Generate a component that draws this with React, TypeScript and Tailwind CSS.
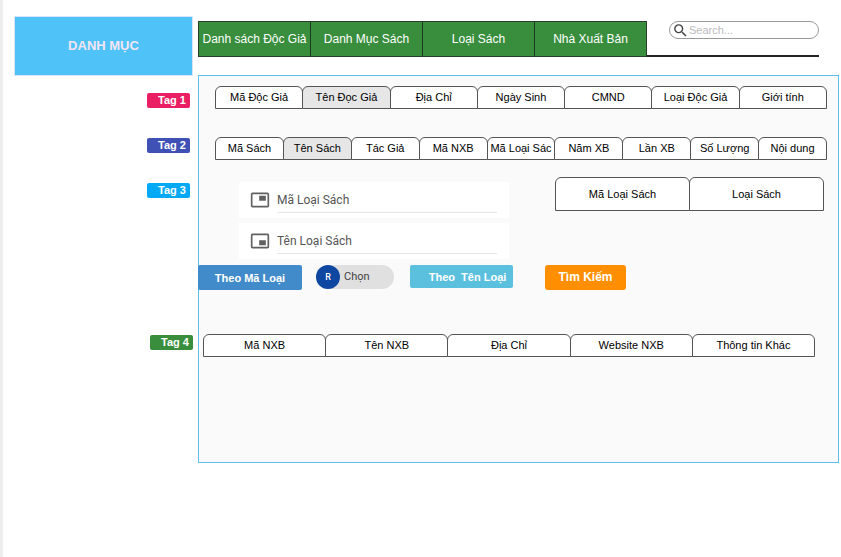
import { MdPictureInPicture, MdPictureInPictureAlt, MdSearch } from "react-icons/md";

const navItems = ["Danh sách Độc Giả", "Danh Mục Sách", "Loại Sách", "Nhà Xuất Bản"];

const readerTabs = ["Mã Độc Giả", "Tên Đọc Giả", "Địa Chỉ", "Ngày Sinh", "CMND", "Loại Độc Giả", "Giới tính"];
const bookTabs = ["Mã Sách", "Tên Sách", "Tác Giả", "Mã NXB", "Mã Loại Sác", "Năm XB", "Lần XB", "Số Lượng", "Nội dung"];
const categoryTabs = ["Mã Loại Sách", "Loại Sách"];
const publisherTabs = ["Mã NXB", "Tên NXB", "Địa Chỉ", "Website NXB", "Thông tin Khác"];

function TabRow({
  items,
  active = -1,
  height = "h-[23px] pb-[2px]",
  className = "",
}: {
  items: string[];
  active?: number;
  height?: string;
  className?: string;
}) {
  return (
    <div role="tablist" className={`flex pl-px ${className}`}>
      {items.map((item, i) => (
        <button
          key={item}
          type="button"
          role="tab"
          aria-selected={i === active}
          className={`-ml-px min-w-0 flex-1 basis-0 whitespace-nowrap rounded-t-md border border-[#555] text-[11px] leading-4 text-black ${height} ${
            i === active ? "bg-[#e6e6e6]" : "bg-white"
          }`}
        >
          {item}
        </button>
      ))}
    </div>
  );
}

function Tag({ text, className }: { text: string; className: string }) {
  return (
    <span
      className={`block h-[15px] w-[43px] rounded-[2px] pr-1 text-right text-[11px] font-bold leading-[15px] text-white ${className}`}
    >
      {text}
    </span>
  );
}

function Field({ label, Icon }: { label: string; Icon: typeof MdPictureInPicture }) {
  return (
    <div className="flex h-9 items-center bg-white pl-[11px] pr-3">
      <Icon size={20} className="shrink-0 text-[#616161]" aria-hidden />
      <input
        type="text"
        aria-label={label}
        placeholder={label}
        className="ml-[7px] h-[26px] min-w-0 flex-1 border-b border-[#e6e6e6] font-['Roboto',sans-serif] text-[12px] leading-4 outline-none placeholder:text-[#555]"
      />
    </div>
  );
}

export default function App() {
  return (
    <div className="flex min-h-screen border-l-[3px] border-[#eeeeee] bg-white pl-[11px] pr-[2px] font-['Liberation_Sans',Arial,sans-serif]">
      <aside className="flex w-[179px] shrink-0 flex-col items-end pt-4">
        <h1 className="flex h-[60px] w-full items-center justify-center border border-[#d6e4f5] bg-[#4fc3f7] text-[13px] font-bold leading-4 text-[#f3e5f5]">
          DANH MỤC
        </h1>
        <Tag text="Tag 1" className="mr-[3px] mt-[17px] bg-[#e91e63]" />
        <Tag text="Tag 2" className="mr-[3px] mt-[30px] bg-[#3f51b5]" />
        <Tag text="Tag 3" className="mr-[3px] mt-[30px] bg-[#03a9f4]" />
        <Tag text="Tag 4" className="mt-[137px] bg-[#388e3c]" />
      </aside>

      <main className="ml-[5px] min-w-0 flex-1 pt-[21px]">
        <header className="mr-5 flex items-stretch">
          <nav className="flex flex-1 border border-[#26402a] bg-[#388e3c]">
            {navItems.map((item, i) => (
              <a
                key={item}
                href="#"
                className={`flex h-[34px] flex-1 basis-0 items-center justify-center whitespace-nowrap text-[12px] leading-4 text-white ${
                  i > 0 ? "border-l border-[#1b3a1e]" : ""
                }`}
              >
                {item}
              </a>
            ))}
          </nav>
          <div className="w-[172px] border-b-2 border-[#222] pl-[22px]">
            <label className="flex h-[18px] items-center rounded-full border border-[#999] pl-[2px] pr-2">
              <MdSearch size={17} className="shrink-0 text-[#444]" aria-hidden />
              <input
                type="search"
                aria-label="Search"
                placeholder="Search..."
                className="min-w-0 flex-1 text-[11px] leading-4 outline-none placeholder:text-[#bbb]"
              />
            </label>
          </div>
        </header>

        <section className="mt-[18px] border border-[#5bc0eb] bg-[#fafafa] pb-[105px] pt-[10px]">
          <TabRow items={readerTabs} active={1} className="ml-4 mr-[11px]" />
          <TabRow items={bookTabs} active={1} className="ml-4 mr-[11px] mt-7" />

          <div className="mt-[17px] flex items-start">
            <div className="ml-10 mt-[5px] flex w-[270px] flex-col gap-[5px]">
              <Field label="Mã Loại Sách" Icon={MdPictureInPicture} />
              <Field label="Tên Loại Sách" Icon={MdPictureInPictureAlt} />
            </div>
            <TabRow items={categoryTabs} height="h-[34px]" className="ml-[46px] mr-[14px] flex-1" />
          </div>

          <div className="-ml-px mt-[6px] flex h-[25px] items-start">
            <button
              type="button"
              className="h-[25px] w-[104px] rounded-[2px] bg-[#428bca] text-[11px] font-bold leading-4 text-white"
            >
              Theo Mã Loại
            </button>
            <button
              type="button"
              className="ml-[14px] flex h-6 w-[78px] items-center rounded-full bg-[#e0e0e0] font-['Roboto',sans-serif] text-[11px] leading-4 text-[#424242]"
            >
              <span className="mr-1 flex h-6 w-6 items-center justify-center rounded-full bg-[#0d47a1] text-[9px] font-medium text-white">
                R
              </span>
              Chọn
            </button>
            <button
              type="button"
              className="ml-4 h-[23px] w-[103px] whitespace-pre rounded-[2px] bg-[#5bc0de] pl-3 text-[11px] font-bold leading-4 text-white"
            >
              {"Theo  Tên Loại"}
            </button>
            <button
              type="button"
              className="ml-8 h-[25px] w-[81px] rounded-[3px] bg-[#ff8f00] pb-[2px] text-[12px] font-bold leading-4 text-white"
            >
              Tìm Kiếm
            </button>
          </div>

          <TabRow items={publisherTabs} className="ml-1 mr-[23px] mt-11" />
        </section>
      </main>
    </div>
  );
}
